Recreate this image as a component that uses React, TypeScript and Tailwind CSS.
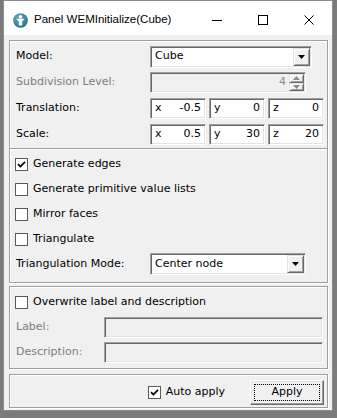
import { ReactNode } from 'react'

const sunken =
  'border border-t-[#a0a0a0] border-l-[#a0a0a0] border-r-white border-b-white shadow-[inset_1px_1px_0_#696969,inset_-1px_-1px_0_#e3e3e3]'
const raised =
  'border border-t-[#e3e3e3] border-l-[#e3e3e3] border-r-[#696969] border-b-[#696969] bg-[#f0f0f0] shadow-[inset_1px_1px_0_#ffffff,inset_-1px_-1px_0_#a0a0a0]'
const etched = 'border border-[#a0a0a0] shadow-[inset_1px_1px_0_#ffffff,1px_1px_0_#ffffff]'

function DownArrow() {
  return (
    <svg width="7" height="4" viewBox="0 0 7 4">
      <polygon points="0,0 7,0 3.5,4" fill="#000" />
    </svg>
  )
}

function Combo({ value, width }: { value: string; width: string }) {
  return (
    <div className={`${sunken} ${width} h-[22px] bg-white flex items-stretch p-[1px]`}>
      <div className="flex-1 flex items-center pl-[3px] text-black">{value}</div>
      <div className={`${raised} w-[17px] flex items-center justify-center`}>
        <DownArrow />
      </div>
    </div>
  )
}

function SpinBox({ value }: { value: string }) {
  return (
    <div className={`${sunken} w-[156px] h-[21px] bg-[#f0f0f0] flex items-stretch p-[1px]`}>
      <div className="flex-1 flex items-center justify-end pr-[3px] text-[#8a8a8a]">{value}</div>
      <div className="w-[15px] flex flex-col">
        <div className={`${raised} flex-1 flex items-center justify-center`}>
          <svg width="7" height="4" viewBox="0 0 7 4">
            <polygon points="0,4 7,4 3.5,0" fill="#8a8a8a" />
          </svg>
        </div>
        <div className={`${raised} flex-1 flex items-center justify-center`}>
          <svg width="7" height="4" viewBox="0 0 7 4">
            <polygon points="0,0 7,0 3.5,4" fill="#8a8a8a" />
          </svg>
        </div>
      </div>
    </div>
  )
}

function Coord({ axis, value }: { axis: string; value: string }) {
  return (
    <div className={`${sunken} w-[56px] h-[21px] bg-white flex items-center p-[1px]`}>
      <span className="pl-[3px]">{axis}</span>
      <span className="flex-1 text-right pr-[3px]">{value}</span>
    </div>
  )
}

function Check({ checked }: { checked?: boolean }) {
  return (
    <div className="w-[13px] h-[13px] border border-[#5a5a5a] bg-white flex items-center justify-center shrink-0">
      {checked && (
        <svg width="9" height="9" viewBox="0 0 9 9">
          <path d="M1 4.2 L3.4 6.6 L8 1.8" stroke="#000" strokeWidth="1.7" fill="none" />
        </svg>
      )}
    </div>
  )
}

function Row({ label, disabled, children }: { label: string; disabled?: boolean; children: ReactNode }) {
  return (
    <div className="h-[21px] flex items-center">
      <div className={`w-[134px] ${disabled ? 'text-[#7d7d7d]' : 'text-black'}`}>{label}</div>
      {children}
    </div>
  )
}

function CheckRow({ label, checked }: { label: string; checked?: boolean }) {
  return (
    <div className="h-[25px] flex items-center gap-[5px] pl-[5px]">
      <Check checked={checked} />
      <span>{label}</span>
    </div>
  )
}

function AppIcon() {
  return (
    <svg width="15" height="15" viewBox="0 0 15 15">
      <defs>
        <radialGradient id="ic" cx="40%" cy="35%" r="70%">
          <stop offset="0" stopColor="#72b4cf" />
          <stop offset="1" stopColor="#1f6688" />
        </radialGradient>
      </defs>
      <circle cx="7.5" cy="7.5" r="7.3" fill="url(#ic)" />
      <circle cx="7.5" cy="3.7" r="1.7" fill="#fff" />
      <path d="M3.3 5.7 H11.7 L9.2 8.2 V12.6 H5.8 V8.2 Z" fill="#fff" />
    </svg>
  )
}

export default function App() {
  return (
    <div className="w-[337px] h-[418px] bg-[#7b7b7b] pl-[3px] overflow-hidden font-[family-name:'DejaVu_Sans',sans-serif] text-[11px] text-black">
      <div className="w-[330px] h-[411px] border border-[#8c8c8c] flex flex-col bg-[#f0f0f0]">
        {/* title bar */}
        <div className="h-[34px] bg-white flex items-center pt-[4px] shrink-0">
          <div className="pl-[9px] flex items-center gap-[6px] flex-1">
            <AppIcon />
            <span className="font-[family-name:'Liberation_Sans',sans-serif] text-[11.5px]">
              Panel WEMInitialize(Cube)
            </span>
          </div>
          <div className="w-[46px] h-[30px] flex items-center justify-center">
            <div className="w-[10px] h-px bg-black" />
          </div>
          <div className="w-[46px] h-[30px] flex items-center justify-center">
            <div className="w-[10px] h-[10px] border border-black" />
          </div>
          <div className="w-[46px] h-[30px] flex items-center justify-center">
            <svg width="10" height="10" viewBox="0 0 10 10">
              <path d="M0.5 0.5 L9.5 9.5 M9.5 0.5 L0.5 9.5" stroke="#000" strokeWidth="1" />
            </svg>
          </div>
        </div>

        {/* body */}
        <div className="flex-1 pl-[5px] pr-[4px] pt-[5px] flex flex-col">
          <div className={`${etched} flex flex-col pb-[7px]`}>
            <div className="pl-[6px] pt-[5px] flex flex-col gap-[5px]">
              <Row label="Model:">
                <Combo value="Cube" width="w-[162px]" />
              </Row>
              <Row label="Subdivision Level:" disabled>
                <SpinBox value="4" />
              </Row>
              <Row label="Translation:">
                <div className="flex gap-[3px]">
                  <Coord axis="x" value="-0.5" />
                  <Coord axis="y" value="0" />
                  <Coord axis="z" value="0" />
                </div>
              </Row>
              <Row label="Scale:">
                <div className="flex gap-[3px]">
                  <Coord axis="x" value="0.5" />
                  <Coord axis="y" value="30" />
                  <Coord axis="z" value="20" />
                </div>
              </Row>
            </div>
            <div className="mt-[3px] border-t border-t-[#a0a0a0] border-b border-b-white" />
            <div className="mt-[2px] flex flex-col">
              <CheckRow label="Generate edges" checked />
              <CheckRow label="Generate primitive value lists" />
              <CheckRow label="Mirror faces" />
              <CheckRow label="Triangulate" />
            </div>
            <div className="mt-[1px] pl-[6px] h-[22px] flex items-center">
              <div className="w-[134px]">Triangulation Mode:</div>
              <Combo value="Center node" width="w-[156px]" />
            </div>
          </div>

          <div className={`${etched} mt-[3px] flex flex-col pb-[5px]`}>
            <div className="pt-[3px]">
              <CheckRow label="Overwrite label and description" />
            </div>
            <div className="mt-[2px] pl-[6px] pr-[4px] flex flex-col gap-[4px]">
              <div className="h-[21px] flex items-center">
                <div className="w-[88px] text-[#7d7d7d]">Label:</div>
                <div className={`${sunken} flex-1 h-[21px] bg-[#f0f0f0]`} />
              </div>
              <div className="h-[21px] flex items-center">
                <div className="w-[88px] text-[#7d7d7d]">Description:</div>
                <div className={`${sunken} flex-1 h-[21px] bg-[#f0f0f0]`} />
              </div>
            </div>
          </div>

          <div className={`${etched} mt-[5px] pt-[5px] pb-[2px] pr-[3px] flex items-center justify-end`}>
            <div className="flex items-center gap-[5px] mr-[25px]">
              <Check checked />
              <span>Auto apply</span>
            </div>
            <div className="relative w-[74px] h-[25px] border border-t-white border-l-white border-r-[#696969] border-b-[#696969] bg-[#f0f0f0] shadow-[inset_-1px_-1px_0_#a0a0a0,inset_1px_1px_0_#e3e3e3] flex items-center justify-center">
              <span>Apply</span>
              <div className="absolute inset-[3px] border border-dotted border-black" />
            </div>
          </div>
        </div>
      </div>
    </div>
  )
}
